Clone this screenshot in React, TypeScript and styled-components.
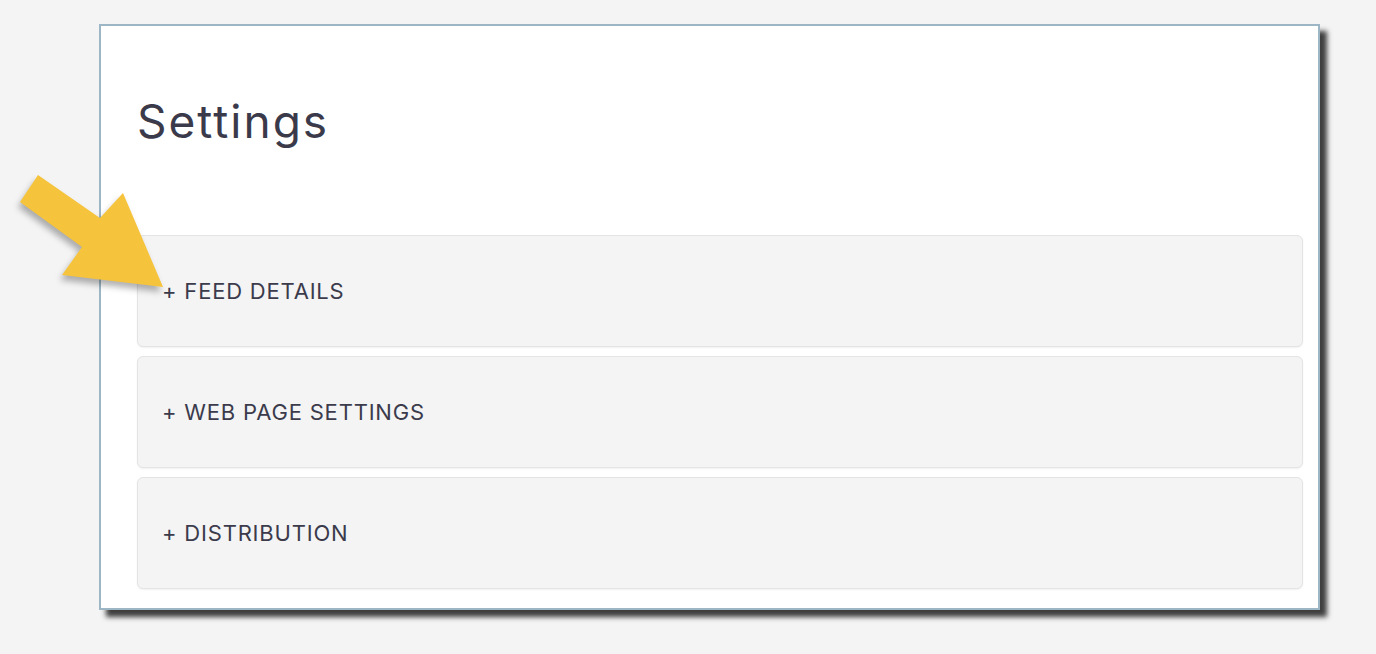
import React from 'react';
import styled, {createGlobalStyle} from "styled-components";

const Global = createGlobalStyle`
  html, body {
    margin: 0;
    padding: 0;
    background: #f4f4f4;
    font-family: Inter, "Noto Sans", sans-serif;
  }
`

const Page = styled.div`
  position: relative;
  width: 1376px;
  height: 654px;
  padding: 24px 0 0 99px;
  box-sizing: border-box;
`

const Card = styled.div`
  width: 1221px;
  height: 586px;
  box-sizing: border-box;
  background: #fff;
  border: 2px solid #9cb6c5;
  box-shadow: 7px 7px 5px rgba(30, 30, 30, 0.85);
  padding: 0 15px 19px 36px;
  display: flex;
  flex-direction: column;
`

const Title = styled.h1`
  margin: 0;
  height: 209px;
  padding-top: 68px;
  box-sizing: border-box;
  font-size: 46px;
  line-height: 54px;
  font-weight: 400;
  letter-spacing: 2px;
  color: #3a3a4b;
`

const List = styled.div`
  display: flex;
  flex-direction: column;
  gap: 9px;
`

const Item = styled.div`
  height: 112px;
  box-sizing: border-box;
  background: #f4f4f4;
  border: 1px solid #e4e4e4;
  border-radius: 6px;
  box-shadow: 0 1px 2px rgba(0, 0, 0, 0.06);
  display: flex;
  align-items: center;
  padding-left: 24px;
  font-size: 22px;
  color: #3b3b4c;
  text-transform: uppercase;
  letter-spacing: 0.8px;
`

const Arrow = styled.svg`
  position: absolute;
  left: 0;
  top: 160px;
  filter: drop-shadow(-2px 5px 3px rgba(0, 0, 0, 0.3));
`

const sections = ['Feed Details', 'Web Page Settings', 'Distribution']

export default function App() {
    return (
        <Page>
            <Global/>
            <Card>
                <Title>Settings</Title>
                <List>
                    {sections.map(s => <Item key={s}>+ {s}</Item>)}
                </List>
            </Card>
            <Arrow width="180" height="140" viewBox="0 160 180 140">
                <polygon
                    points="38,175 100,218 123,193 163,287 62,275 82,247 20,202"
                    fill="#f5c33c"
                />
            </Arrow>
        </Page>
    );
}
